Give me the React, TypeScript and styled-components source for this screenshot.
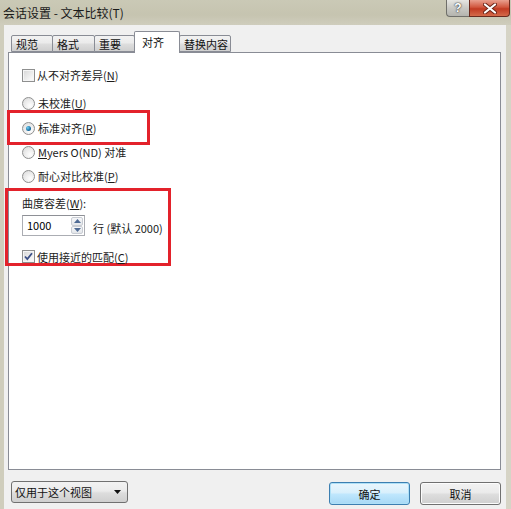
import styled, { createGlobalStyle } from "styled-components";

const GlobalStyle = createGlobalStyle`
  html, body {
    margin: 0;
    padding: 0;
    background: #d1cfbf;
  }
  body {
    font-family: "Noto Sans CJK SC", "Noto Sans", sans-serif;
    font-size: 11px;
    color: #1b1b1b;
  }
`;

const tabs = [
  { label: "规范", width: 42 },
  { label: "格式", width: 43 },
  { label: "重要", width: 41 },
  { label: "对齐", width: 46, active: true },
  { label: "替换内容", width: 52 },
];

const CheckMark = () => (
  <svg width="11" height="11" viewBox="0 0 11 11">
    <path d="M2 5.5 L4.3 8 L9 2.2" fill="none" stroke="#3b4f86" strokeWidth="1.8" />
  </svg>
);

const SpinArrow = ({ up }: { up?: boolean }) => (
  <svg width="7" height="4" viewBox="0 0 7 4">
    <path d={up ? "M0 4 L3.5 0 L7 4 Z" : "M0 0 L3.5 4 L7 0 Z"} fill="#4e6a94" />
  </svg>
);

const CloseGlyph = () => (
  <svg width="14" height="11" viewBox="0 0 14 11">
    <path d="M2 1.5 L12 9.5 M12 1.5 L2 9.5" stroke="#6b2418" strokeWidth="4" strokeLinecap="round" />
    <path d="M2 1.5 L12 9.5 M12 1.5 L2 9.5" stroke="#ffffff" strokeWidth="2.2" strokeLinecap="round" />
  </svg>
);

export default function App() {
  return (
    <>
      <GlobalStyle />
      <Window>
        <TitleBar>
          <TitleText>会话设置 - 文本比较(T)</TitleText>
          <Controls>
            <HelpButton>?</HelpButton>
            <CloseButton>
              <CloseGlyph />
            </CloseButton>
          </Controls>
        </TitleBar>

        <Client>
          <TabStrip>
            {tabs.map((t) => (
              <Tab key={t.label} $width={t.width} $active={!!t.active}>
                {t.label}
              </Tab>
            ))}
          </TabStrip>

          <Panel>
            <OptionRow>
              <CheckBox />
              <span>
                从不对齐差异(<u>N</u>)
              </span>
            </OptionRow>

            <OptionRow $spaced>
              <Radio />
              <span>
                未校准(<u>U</u>)
              </span>
            </OptionRow>

            <Highlight $width={143} $shift={15}>
              <OptionRow>
                <Radio $checked />
                <span>
                  标准对齐(<u>R</u>)
                </span>
              </OptionRow>
            </Highlight>

            <OptionRow>
              <Radio />
              <span>
                <u>M</u>yers O(ND) 对准
              </span>
            </OptionRow>

            <OptionRow>
              <Radio />
              <span>
                耐心对比校准(<u>P</u>)
              </span>
            </OptionRow>

            <Highlight $width={166} $shift={17} $tight>
              <FieldLabel>
                曲度容差(<u>W</u>):
              </FieldLabel>
              <SpinRow>
                <SpinBox>
                  <SpinValue>1000</SpinValue>
                  <SpinButtons>
                    <SpinButton>
                      <SpinArrow up />
                    </SpinButton>
                    <SpinButton>
                      <SpinArrow />
                    </SpinButton>
                  </SpinButtons>
                </SpinBox>
                <SpinHint>行 (默认 2000)</SpinHint>
              </SpinRow>
              <CheckedRow>
                <CheckBox>
                  <CheckMark />
                </CheckBox>
                <span>
                  使用接近的匹配(<u>C</u>)
                </span>
              </CheckedRow>
            </Highlight>
          </Panel>

          <ButtonRow>
            <Dropdown>
              <span>仅用于这个视图</span>
              <svg width="7" height="4" viewBox="0 0 7 4">
                <path d="M0 0 L7 0 L3.5 4 Z" fill="#111" />
              </svg>
            </Dropdown>
            <Spacer />
            <DialogButton $primary>确定</DialogButton>
            <DialogButton>取消</DialogButton>
          </ButtonRow>
        </Client>
      </Window>
    </>
  );
}

const Window = styled.div`
  width: 511px;
  height: 509px;
  display: flex;
  flex-direction: column;
  background: linear-gradient(to right, #cfcdbc, #d6d4c6);
  overflow: hidden;
`;

const TitleBar = styled.div`
  height: 25px;
  flex: none;
  display: flex;
  justify-content: space-between;
  align-items: flex-start;
  background: linear-gradient(to bottom, #cac9b6, #c6c4b0 60%, #cfcdbd);
`;

const TitleText = styled.div`
  padding: 4px 0 0 3px;
  font-size: 12px;
  line-height: 17px;
  color: #1a1a1a;
`;

const Controls = styled.div`
  display: flex;
  margin-right: 1px;
`;

const HelpButton = styled.div`
  width: 23px;
  height: 17px;
  box-sizing: border-box;
  border: 1px solid #6f6f6a;
  border-top: none;
  border-right: none;
  border-bottom-left-radius: 4px;
  background: linear-gradient(to bottom, #e6e6e2, #c9c9c4 50%, #b4b4ae);
  color: #fff;
  font-family: "Liberation Sans", sans-serif;
  font-weight: bold;
  font-size: 12px;
  line-height: 16px;
  text-align: center;
  text-shadow: 0 0 2px #333, 0 0 1px #333;
`;

const CloseButton = styled.div`
  width: 41px;
  height: 17px;
  box-sizing: border-box;
  border: 1px solid #6a2a1e;
  border-top: none;
  border-bottom-right-radius: 4px;
  background: linear-gradient(to bottom, #e9a08f, #d1573f 45%, #c13a22 55%, #d46a4a);
  display: flex;
  align-items: center;
  justify-content: center;
`;

const Client = styled.div`
  flex: 1;
  margin: 0 5px 0 4px;
  padding-top: 6px;
  background: #f0f0f0;
  display: flex;
  flex-direction: column;
`;

const TabStrip = styled.div`
  height: 21px;
  display: flex;
  align-items: flex-end;
  padding-left: 7px;
  position: relative;
  z-index: 1;
`;

const Tab = styled.div<{ $width: number; $active: boolean }>`
  width: ${(p) => p.$width}px;
  height: ${(p) => (p.$active ? 22 : 17)}px;
  margin-right: -1px;
  margin-bottom: ${(p) => (p.$active ? -1 : 0)}px;
  box-sizing: border-box;
  border: 1px solid #898c95;
  border-bottom: ${(p) => (p.$active ? "none" : "1px solid #898c95")};
  border-radius: 2px 2px 0 0;
  padding: ${(p) => (p.$active ? "3px 0 0 7px" : "1px 0 0 4px")};
  background: ${(p) =>
    p.$active ? "#ffffff" : "linear-gradient(to bottom, #f2f2f2, #ebebeb 45%, #dddddd 55%, #cfcfcf)"};
  position: relative;
  z-index: ${(p) => (p.$active ? 2 : 1)};
  font-size: 11px;
  line-height: 14px;
  color: #111;
`;

const Panel = styled.div`
  height: 418px;
  flex: none;
  box-sizing: border-box;
  margin: 0 5px 0 4px;
  padding: 10px 0 0 13px;
  border: 1px solid #898c95;
  background: #ffffff;
  display: flex;
  flex-direction: column;
  align-items: flex-start;
`;

const OptionRow = styled.div<{ $spaced?: boolean }>`
  height: 24px;
  display: flex;
  align-items: center;
  gap: 2px;
  margin-top: ${(p) => (p.$spaced ? 4 : 0)}px;
  color: #1b1b1b;
  white-space: nowrap;

  u {
    text-underline-offset: 1px;
  }
`;

const Highlight = styled.div<{ $width: number; $shift: number; $tight?: boolean }>`
  width: ${(p) => p.$width}px;
  box-sizing: border-box;
  margin: ${(p) => (p.$tight ? "0" : "-5px 0 -5px")} -${(p) => p.$shift}px;
  margin-right: 0;
  padding: ${(p) => (p.$tight ? "4px 0 0" : "3px 0 2px")} ${(p) => p.$shift - 3}px;
  padding-right: 0;
  border: 3px solid #e3222b;
  display: flex;
  flex-direction: column;
  align-items: flex-start;
`;

const CheckBox = styled.span`
  width: 13px;
  height: 13px;
  box-sizing: border-box;
  border: 1px solid #8e8f8f;
  box-shadow: inset 0 0 0 1px #f5f5f5;
  background: linear-gradient(135deg, #d6d6d6, #f7f7f7 80%);
  display: inline-flex;
  align-items: center;
  justify-content: center;
  flex: none;
`;

const Radio = styled.span<{ $checked?: boolean }>`
  width: 13px;
  height: 13px;
  box-sizing: border-box;
  border-radius: 50%;
  border: 1px solid #8e8f8f;
  background: radial-gradient(circle at 65% 70%, #fbfbfb 10%, #dcdcdc 90%);
  display: inline-flex;
  align-items: center;
  justify-content: center;
  flex: none;
  margin-right: 1px;

  &::after {
    content: "";
    display: ${(p) => (p.$checked ? "block" : "none")};
    width: 5px;
    height: 5px;
    border-radius: 50%;
    background: radial-gradient(circle at 35% 35%, #6fd0f5, #1b6fa3 60%, #0c3e63);
  }
`;

const FieldLabel = styled.div`
  height: 16px;
  line-height: 16px;
  white-space: nowrap;
`;

const SpinRow = styled.div`
  display: flex;
  align-items: center;
  margin-top: 4px;
`;

const SpinBox = styled.div`
  width: 63px;
  height: 21px;
  box-sizing: border-box;
  border: 1px solid #abadb3;
  border-top-color: #8e9096;
  background: #fff;
  display: flex;
  align-items: stretch;
  padding: 1px;
`;

const SpinValue = styled.div`
  flex: 1;
  padding-left: 3px;
  line-height: 17px;
  font-size: 11px;
  color: #000;
`;

const SpinButtons = styled.div`
  width: 12px;
  display: flex;
  flex-direction: column;
`;

const SpinButton = styled.div`
  flex: 1;
  box-sizing: border-box;
  border: 1px solid #c8ccd3;
  border-radius: 2px;
  background: linear-gradient(to bottom, #f6f7f9, #e3e6ea);
  display: flex;
  align-items: center;
  justify-content: center;
`;

const SpinHint = styled.div`
  margin-left: 8px;
  padding-top: 5px;
  white-space: nowrap;
`;

const CheckedRow = styled.div`
  height: 13px;
  margin-top: 14px;
  display: flex;
  align-items: center;
  gap: 2px;
  white-space: nowrap;
`;

const ButtonRow = styled.div`
  margin-top: 11px;
  height: 24px;
  padding: 0 5px 0 7px;
  display: flex;
  align-items: flex-start;
`;

const Dropdown = styled.div`
  width: 117px;
  height: 22px;
  box-sizing: border-box;
  border: 1px solid #707070;
  border-radius: 3px;
  background: linear-gradient(to bottom, #f2f2f2, #ebebeb 45%, #dddddd 55%, #cfcfcf);
  display: flex;
  align-items: center;
  justify-content: space-between;
  padding: 0 6px 0 3px;
  color: #111;
`;

const Spacer = styled.div`
  flex: 1;
`;

const DialogButton = styled.div<{ $primary?: boolean }>`
  width: 81px;
  height: 23px;
  margin-top: 1px;
  margin-left: ${(p) => (p.$primary ? 0 : 10)}px;
  box-sizing: border-box;
  border: 1px solid ${(p) => (p.$primary ? "#3c7fb1" : "#707070")};
  border-radius: 3px;
  background: ${(p) =>
    p.$primary
      ? "linear-gradient(to bottom, #eaf6fd, #d9f0fc 45%, #bee6fd 55%, #a7d9f5)"
      : "linear-gradient(to bottom, #f2f2f2, #ebebeb 45%, #dddddd 55%, #cfcfcf)"};
  box-shadow: ${(p) => (p.$primary ? "inset 0 0 0 1px #aee0f7" : "inset 0 0 0 1px #fcfcfc")};
  display: flex;
  align-items: center;
  justify-content: center;
  color: #111;
`;
